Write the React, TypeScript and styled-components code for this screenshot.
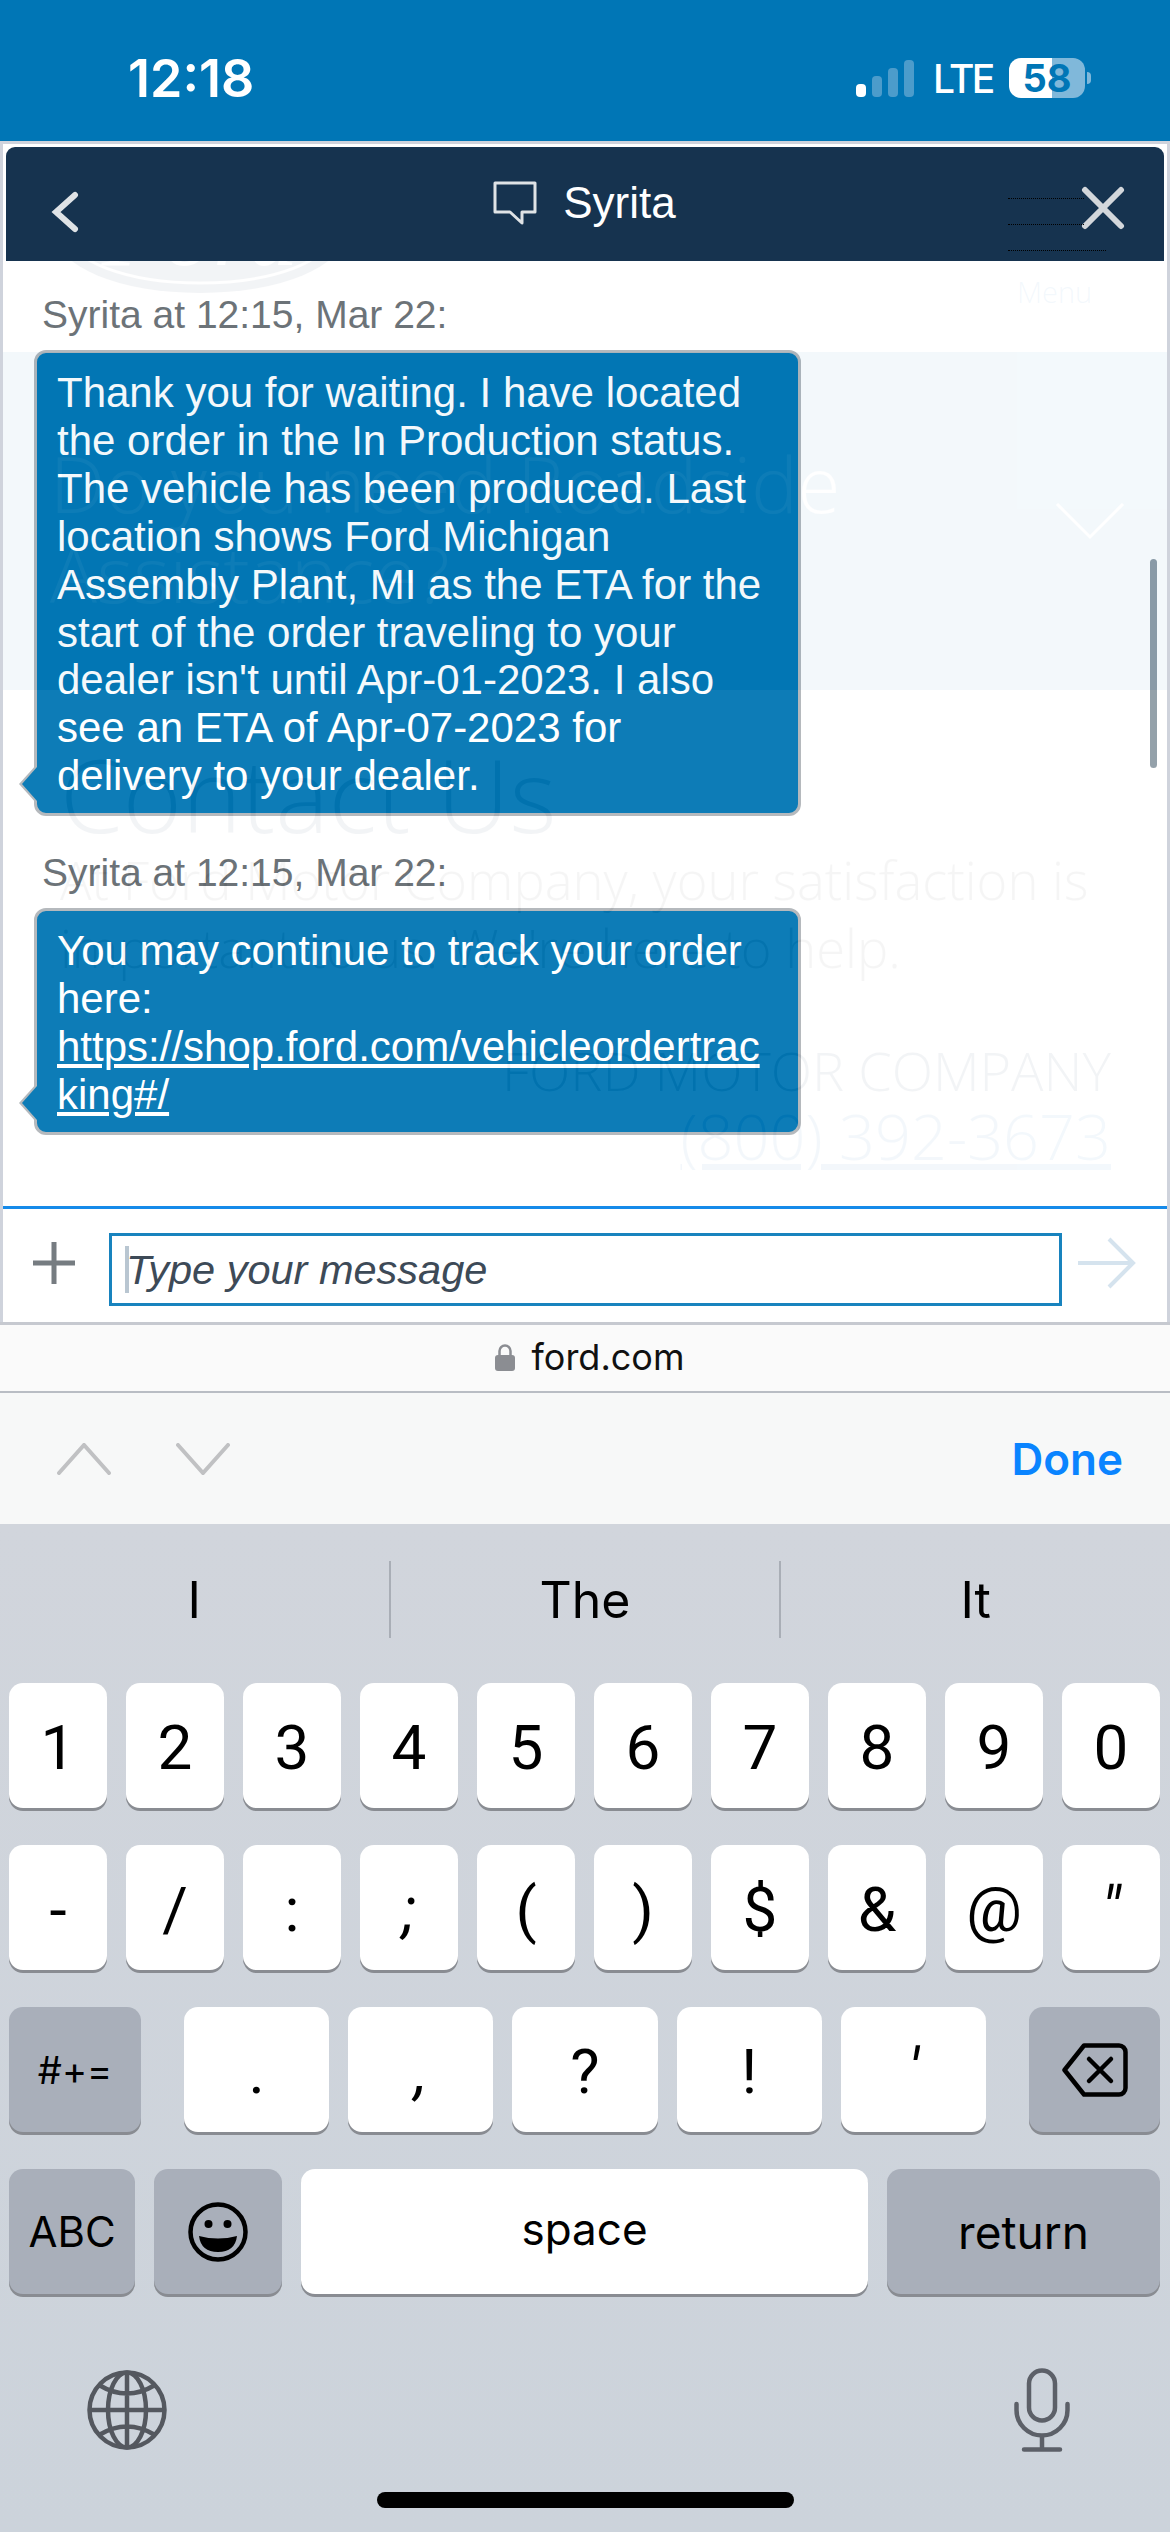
import React from "react";
import styled, { createGlobalStyle } from "styled-components";

const GlobalStyle = createGlobalStyle`
  html, body {
    margin: 0;
    padding: 0;
    background: #ccd3db;
  }
  * {
    box-sizing: border-box;
  }
`;

const Screen = styled.div`
  width: 1170px;
  height: 2532px;
  display: flex;
  flex-direction: column;
  overflow: hidden;
  font-family: Arial, "Liberation Sans", sans-serif;
`;

/* status bar */
const StatusBar = styled.header`
  height: 141px;
  flex: none;
  background: #0076b6;
  color: #fff;
  display: flex;
  align-items: center;
  justify-content: space-between;
  padding: 15px 79px 0 128px;
  font-family: Inter, sans-serif;
`;

const Clock = styled.span`
  font-size: 52px;
  font-weight: 600;
`;

const StatusRight = styled.div`
  display: flex;
  align-items: center;
`;

const Signal = styled.div`
  display: flex;
  align-items: flex-end;
  gap: 6px;
  height: 37px;
  margin-right: 19px;
`;

const SignalBar = styled.i<{ $h: number; $on?: boolean }>`
  display: block;
  width: 10px;
  height: ${(p) => p.$h}px;
  border-radius: 4px;
  background: ${(p) => (p.$on ? "#fff" : "#4c9ccb")};
`;

const Lte = styled.span`
  width: 57px;
  font-size: 39px;
  font-weight: 500;
  letter-spacing: -2.5px;
  margin-right: 19px;
`;

const Battery = styled.div`
  width: 76px;
  height: 40px;
  border-radius: 12px;
  background: linear-gradient(90deg, #fff 57%, #80b8da 57%);
  color: #0076b6;
  font-size: 38px;
  font-weight: 700;
  display: flex;
  align-items: center;
  justify-content: center;
`;

const BatteryCap = styled.i`
  display: block;
  width: 4px;
  height: 12px;
  margin-left: 2px;
  border-radius: 0 4px 4px 0;
  background: #80b8da;
`;

/* browser viewport: ford page sits behind the see-through chat panel */
const Browser = styled.main`
  position: relative;
  height: 1181px;
  flex: none;
  background: #fff;
`;

const PageBehind = styled.div`
  position: absolute;
  inset: 0;
  font-family: "Open Sans", sans-serif;
  font-weight: 300;
  color: #0a2850;
`;

const PageTop = styled.div`
  height: 211px;
  position: relative;
`;

const LogoOval = styled.svg`
  position: absolute;
  left: 55px;
  top: 32px;
`;

const MenuText = styled.span`
  position: absolute;
  left: 1017px;
  top: 131px;
  font-size: 29px;
  line-height: 40px;
  color: #1c74b8;
`;

const Band = styled.section`
  height: 338px;
  background: #2387c3;
  color: #fff;
  padding: 86px 50px 0;
  position: relative;
  font-size: 78px;
  line-height: 90px;
  white-space: nowrap;
`;

const BandChevron = styled.svg`
  position: absolute;
  right: 45px;
  top: 150px;
`;

const ContactTitle = styled.h2`
  margin: 53px 0 0 60px;
  font-size: 101px;
  line-height: 103px;
  font-weight: 300;
`;

const ContactText = styled.p`
  margin: 0 0 0 60px;
  font-size: 52.5px;
  line-height: 68px;
  color: #4d4d4d;
  white-space: nowrap;
`;

const ContactRight = styled.div`
  margin: 55px 59px 0 0;
  text-align: right;
`;

const CompanyName = styled.div`
  font-size: 54px;
  line-height: 66px;
`;

const CompanyPhone = styled.div`
  font-size: 63px;
  line-height: 66px;
  color: #1c74b8;
  text-decoration: underline;
`;

/* chat panel */
const ChatPanel = styled.div`
  position: absolute;
  inset: 0;
  display: flex;
  flex-direction: column;
  border: 3px solid #cfd3dc;
  border-bottom: none;
`;

const ChatHeader = styled.div`
  position: relative;
  flex: none;
  height: 114px;
  margin: 3px 3px 0;
  border-radius: 9px 9px 0 0;
  background: #16334f;
  color: #fff;
  display: grid;
  grid-template-columns: 1fr auto 1fr;
  align-items: center;
  padding: 0 39px 0 44px;
`;

const BackIcon = styled.svg`
  margin-top: 16px;
`;

const ChatTitle = styled.div`
  display: flex;
  align-items: center;
  gap: 26px;
  font-size: 44px;
  margin: -2px 6px 0 0;
`;

const CloseIcon = styled.svg`
  justify-self: end;
  margin-top: 8px;
  position: relative;
`;

const DottedLine = styled.i<{ $top: number; $w: number }>`
  position: absolute;
  left: 1002px;
  top: ${(p) => p.$top}px;
  width: ${(p) => p.$w}px;
  border-top: 1px dotted #000;
`;

const Messages = styled.div`
  position: relative;
  flex: 1;
  min-height: 0;
  padding: 31px 0 0 31px;
  background: #fff;
  opacity: 0.95;
`;

const SenderLine = styled.div`
  margin: 0 0 12px 8px;
  font-size: 39px;
  line-height: 46px;
  color: #656c71;
`;

const Bubble = styled.div`
  position: relative;
  width: 767px;
  margin: 0 0 34px;
  padding: 16px 24px 13px 20px;
  border: 3px solid #b2b6ba;
  border-radius: 12px;
  background: #0176b4;
  color: #fff;
  font-size: 42px;
  line-height: 47.9px;
  overflow-wrap: anywhere;

  &::before {
    content: "";
    position: absolute;
    left: -18px;
    bottom: 9px;
    border-style: solid;
    border-width: 20px 18px 20px 0;
    border-color: transparent #b2b6ba transparent transparent;
  }

  &::after {
    content: "";
    position: absolute;
    left: -15px;
    bottom: 12px;
    border-style: solid;
    border-width: 17px 15px 17px 0;
    border-color: transparent #0176b4 transparent transparent;
  }

  a {
    color: #fff;
    text-decoration: underline;
  }
`;

const ScrollThumb = styled.i`
  position: absolute;
  right: 10px;
  top: 298px;
  width: 7px;
  height: 209px;
  border-radius: 4px;
  background: #8f9ca6;
`;

const Composer = styled.div`
  flex: none;
  height: 116px;
  border-top: 3px solid #0a84e8;
  background: #fff;
  opacity: 0.95;
  display: flex;
  align-items: center;
  padding: 0 31px 6px 29px;
`;

const InputBox = styled.div`
  position: relative;
  width: 953px;
  height: 73px;
  margin: 14px 16px 0 33px;
  padding: 0 14px;
  border: 3px solid #0c7dbb;
  display: flex;
  align-items: center;
  font-size: 41.5px;
  font-style: italic;
  color: #33414f;
`;

const Caret = styled.i`
  position: absolute;
  left: 13px;
  top: 10px;
  width: 4px;
  height: 47px;
  background: #b6c3cf;
`;

/* safari bits */
const UrlBar = styled.div`
  flex: none;
  height: 71px;
  border-top: 3px solid #c6c9d0;
  border-bottom: 2px solid #b9bdc4;
  background: #fafafa;
  display: flex;
  align-items: center;
  justify-content: center;
  gap: 17px;
  color: #111;
  font-family: Inter, sans-serif;
  font-size: 36px;
  padding: 0 0 3px 9px;
`;

const AccessoryBar = styled.div`
  flex: none;
  height: 131px;
  background: #f7f8f8;
  display: flex;
  align-items: center;
  padding: 0 47px 0 57px;
`;

const ArrowButtons = styled.div`
  flex: 1;
  display: flex;
  gap: 65px;
`;

const DoneButton = styled.span`
  font-family: Inter, sans-serif;
  font-size: 44px;
  font-weight: 600;
  color: #0a84ff;
`;

/* keyboard */
const Keyboard = styled.div`
  flex: 1;
  display: flex;
  flex-direction: column;
  align-items: stretch;
  background: linear-gradient(#d1d5dc, #ccd3db);
  font-family: Roboto, sans-serif;
  color: #000;
`;

const Suggestions = styled.div`
  height: 159px;
  flex: none;
  display: flex;
  align-items: center;
  padding-bottom: 8px;
`;

const Suggestion = styled.div<{ $line?: boolean }>`
  flex: 1;
  height: 77px;
  display: flex;
  align-items: center;
  justify-content: center;
  font-size: 50px;
  font-family: Inter, sans-serif;
  border-right: ${(p) => (p.$line ? "2px solid #a9aeb6" : "none")};
`;

const KeyRows = styled.div`
  display: flex;
  flex-direction: column;
  gap: 34px;
  padding: 0 10px 0 9px;
`;

const KeyRow = styled.div`
  display: flex;
  gap: 19px;
`;

const Key = styled.div<{ $w?: number; $dark?: boolean; $fs?: number; $sans?: boolean; $slant?: boolean; $lift?: boolean }>`
  flex: ${(p) => (p.$w ? `0 0 ${p.$w}px` : "1")};
  height: 125px;
  margin-bottom: 3px;
  padding-top: ${(p) => (p.$sans ? 0 : 3)}px;
  padding-bottom: ${(p) => (p.$lift ? 5 : 0)}px;
  border-radius: 14px;
  display: flex;
  align-items: center;
  justify-content: center;
  background: ${(p) => (p.$dark ? "#a9afba" : "#fff")};
  box-shadow: 0 3px 0 #898c92;
  font-size: ${(p) => p.$fs ?? 62}px;
  font-family: ${(p) => (p.$sans ? "Inter, sans-serif" : "inherit")};
  font-style: ${(p) => (p.$slant ? "italic" : "normal")};
`;

const KeySpacer = styled.div`
  flex: 0 0 5px;
`;

const BottomIcons = styled.div`
  display: flex;
  justify-content: space-between;
  align-items: center;
  height: 85px;
  margin-top: 70px;
  padding: 0 100px 0 87px;
`;

const HomeIndicator = styled.div`
  width: 417px;
  height: 16px;
  margin: 40px 0 0 377px;
  border-radius: 8px;
  background: #000;
`;

const firstMessage =
  "Thank you for waiting. I have located the order in the In Production status. The vehicle has been produced. Last location shows Ford Michigan Assembly Plant, MI as the ETA for the start of the order traveling to your dealer isn't until Apr-01-2023. I also see an ETA of Apr-07-2023 for delivery to your dealer.";

const digits = ["1", "2", "3", "4", "5", "6", "7", "8", "9", "0"];
const symbols = ["-", "/", ":", ";", "(", ")", "$", "&", "@", "″"];
const punctuation = [".", ",", "?", "!", "′"];
const slanted = ["″", "′", ",", ";"];

const App = () => {
  return (
    <Screen>
      <GlobalStyle />
      <StatusBar>
        <Clock>12:18</Clock>
        <StatusRight>
          <Signal>
            <SignalBar $h={13} $on />
            <SignalBar $h={21} />
            <SignalBar $h={29} />
            <SignalBar $h={37} />
          </Signal>
          <Lte>LTE</Lte>
          <Battery>58</Battery>
          <BatteryCap />
        </StatusRight>
      </StatusBar>

      <Browser>
        <PageBehind>
          <PageTop>
            <LogoOval width="290" height="120" viewBox="0 0 290 120">
              <ellipse cx="145" cy="60" rx="145" ry="60" fill="#0a2850" />
              <ellipse cx="145" cy="60" rx="132" ry="50" fill="none" stroke="#fff" strokeWidth="3" />
              <text x="145" y="92" textAnchor="middle" fontSize="100" fontStyle="italic" fill="#fff" fontFamily="Liberation Serif">
                Ford
              </text>
            </LogoOval>
            <MenuText>Menu</MenuText>
          </PageTop>
          <Band>
            Do you need Roadside
            <br />
            Assistance?
            <BandChevron width="70" height="38" viewBox="0 0 70 38" fill="none" stroke="#fff" strokeWidth="3">
              <path d="M2 2 L35 35 L68 2" />
            </BandChevron>
          </Band>
          <ContactTitle>Contact Us</ContactTitle>
          <ContactText>
            At Ford Motor Company, your satisfaction is
            <br />
            important to us. We're here to help.
          </ContactText>
          <ContactRight>
            <CompanyName>FORD MOTOR COMPANY</CompanyName>
            <CompanyPhone>(800) 392-3673</CompanyPhone>
          </ContactRight>
        </PageBehind>

        <ChatPanel>
          <ChatHeader>
            <BackIcon width="30" height="42" viewBox="0 0 30 42" fill="none" stroke="#dfe3e6" strokeWidth="6" strokeLinecap="round">
              <path d="M25 4 L6 21 L25 38" />
            </BackIcon>
            <ChatTitle>
              <svg width="44" height="44" viewBox="0 0 44 44" fill="none" stroke="#dfe3e6" strokeWidth="3">
                <path d="M2 2 H42 V31 H29 V42 L17 31 H2 Z" strokeLinejoin="round" />
              </svg>
              Syrita
            </ChatTitle>
            <CloseIcon width="44" height="44" viewBox="0 0 44 44" fill="none" stroke="#d3d7db" strokeWidth="6" strokeLinecap="round">
              <path d="M4 4 L40 40 M40 4 L4 40" />
            </CloseIcon>
            <DottedLine $top={51} $w={76} />
            <DottedLine $top={77} $w={76} />
            <DottedLine $top={103} $w={98} />
          </ChatHeader>

          <Messages>
            <SenderLine>Syrita at 12:15, Mar 22:</SenderLine>
            <Bubble>{firstMessage}</Bubble>
            <SenderLine>Syrita at 12:15, Mar 22:</SenderLine>
            <Bubble>
              You may continue to track your order here:{" "}
              <a href="#track">https://shop.ford.com/vehicleordertracking#/</a>
            </Bubble>
            <ScrollThumb />
          </Messages>

          <Composer>
            <svg width="44" height="44" viewBox="0 0 44 44" stroke="#6f757b" strokeWidth="5">
              <path d="M22 1 V43 M1 22 H43" />
            </svg>
            <InputBox>
              <Caret />
              Type your message
            </InputBox>
            <svg width="58" height="52" viewBox="0 0 58 52" fill="none" stroke="#d3e2ee" strokeWidth="4">
              <path d="M0 26 H55 M31 2 L55 26 L31 50" />
            </svg>
          </Composer>
        </ChatPanel>
      </Browser>

      <UrlBar>
        <svg width="20" height="28" viewBox="0 0 20 28">
          <path d="M4.5 13 V8 a5.5 5.5 0 0 1 11 0 V13" fill="none" stroke="#8b8d92" strokeWidth="2.5" />
          <rect x="0" y="12" width="20" height="16" rx="3" fill="#8b8d92" />
        </svg>
        ford.com
      </UrlBar>

      <AccessoryBar>
        <ArrowButtons>
          <svg width="54" height="32" viewBox="0 0 54 32" fill="none" stroke="#c0c1c3" strokeWidth="4" strokeLinecap="round">
            <path d="M2 30 L27 2 L52 30" />
          </svg>
          <svg width="54" height="32" viewBox="0 0 54 32" fill="none" stroke="#c0c1c3" strokeWidth="4" strokeLinecap="round">
            <path d="M2 2 L27 30 L52 2" />
          </svg>
        </ArrowButtons>
        <DoneButton>Done</DoneButton>
      </AccessoryBar>

      <Keyboard>
        <Suggestions>
          <Suggestion $line>I</Suggestion>
          <Suggestion $line>The</Suggestion>
          <Suggestion>It</Suggestion>
        </Suggestions>
        <KeyRows>
          <KeyRow>
            {digits.map((d) => (
              <Key key={d}>{d}</Key>
            ))}
          </KeyRow>
          <KeyRow>
            {symbols.map((s) => (
              <Key key={s} $slant={slanted.includes(s)}>
                {s}
              </Key>
            ))}
          </KeyRow>
          <KeyRow>
            <Key $w={132} $dark $fs={38} $sans>
              #+=
            </Key>
            <KeySpacer />
            {punctuation.map((p) => (
              <Key key={p} $slant={slanted.includes(p)}>
                {p}
              </Key>
            ))}
            <KeySpacer />
            <Key $w={131} $dark $sans>
              <svg width="66" height="54" viewBox="0 0 66 54" fill="none" stroke="#000" strokeWidth="4.5" strokeLinejoin="round" strokeLinecap="round">
                <path d="M22 2.5 H57 a6.5 6.5 0 0 1 6.5 6.5 V45 a6.5 6.5 0 0 1 -6.5 6.5 H22 L2.5 27 Z" />
                <path d="M27 16 L49 38 M49 16 L27 38" />
              </svg>
            </Key>
          </KeyRow>
          <KeyRow>
            <Key $w={126} $dark $fs={42} $sans>
              ABC
            </Key>
            <Key $w={128} $dark $sans>
              <svg width="60" height="60" viewBox="0 0 60 60" fill="none">
                <circle cx="30" cy="30" r="27.5" stroke="#000" strokeWidth="4.5" />
                <circle cx="20.5" cy="22" r="4" fill="#000" />
                <circle cx="39.5" cy="22" r="4" fill="#000" />
                <path d="M11 34 Q30 39 49 34 Q47 50 30 50 Q13 50 11 34 Z" fill="#000" />
              </svg>
            </Key>
            <Key $fs={44} $sans $lift>
              space
            </Key>
            <Key $w={273} $dark $fs={46} $sans>
              return
            </Key>
          </KeyRow>
        </KeyRows>
        <BottomIcons>
          <svg width="80" height="80" viewBox="0 0 80 80" fill="none" stroke="#54585f" strokeWidth="4.5">
            <circle cx="40" cy="40" r="37.5" />
            <ellipse cx="40" cy="40" rx="19" ry="37.5" />
            <path d="M40 2.5 V77.5 M2.5 40 H77.5 M12 15 Q40 32 68 15 M12 65 Q40 48 68 65" />
          </svg>
          <svg width="56" height="84" viewBox="0 0 56 84" fill="none" stroke="#5c6068" strokeWidth="4.5" strokeLinecap="round">
            <rect x="15" y="2.5" width="26" height="50" rx="13" />
            <path d="M2.5 36 V42 a25.5 25.5 0 0 0 51 0 V36 M28 68 V81.5 M10 81.5 H46" />
          </svg>
        </BottomIcons>
        <HomeIndicator />
      </Keyboard>
    </Screen>
  );
};

export default App;
